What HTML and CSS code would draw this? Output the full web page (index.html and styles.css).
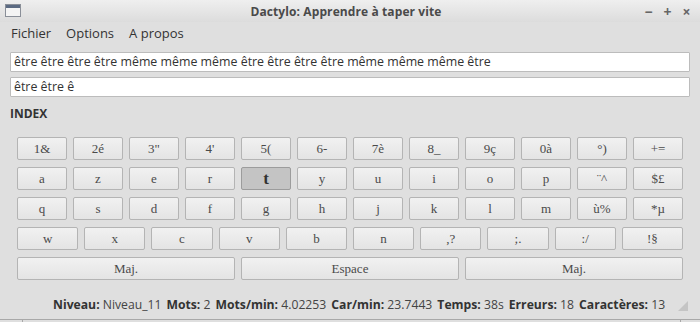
FILE: index.html
```html
<!DOCTYPE html>
<html lang="fr">
<head>
<meta charset="utf-8">
<title>Dactylo</title>
<link rel="stylesheet" href="styles.css">
</head>
<body>
<div class="window">
  <div class="titlebar">
    <svg class="appicon" width="16" height="13" viewBox="0 0 16 13">
      <rect x="0.5" y="0.5" width="15" height="12" fill="#f4f4f4" stroke="#8a8f98"/>
      <rect x="1" y="1" width="14" height="3" fill="#5b6a82"/>
    </svg>
    <div class="title">Dactylo: Apprendre à taper vite</div>
    <div class="wbtns">
      <span class="wbtn">−</span>
      <span class="wbtn">+</span>
      <span class="wbtn">×</span>
    </div>
  </div>
  <div class="menubar">
    <span class="menu">Fichier</span>
    <span class="menu">Options</span>
    <span class="menu">A propos</span>
  </div>
  <div class="content">
    <div class="field">être être être être même même même être être être être même même même être</div>
    <div class="field">être être ê</div>
    <div class="label">INDEX</div>
    <div class="keyboard">
      <div class="row">
        <div class="key">1&amp;</div><div class="key">2é</div><div class="key">3"</div><div class="key">4'</div><div class="key">5(</div><div class="key">6-</div><div class="key">7è</div><div class="key">8_</div><div class="key">9ç</div><div class="key">0à</div><div class="key">°)</div><div class="key">+=</div>
      </div>
      <div class="row">
        <div class="key">a</div><div class="key">z</div><div class="key">e</div><div class="key">r</div><div class="key active">t</div><div class="key">y</div><div class="key">u</div><div class="key">i</div><div class="key">o</div><div class="key">p</div><div class="key">¨^</div><div class="key">$£</div>
      </div>
      <div class="row">
        <div class="key">q</div><div class="key">s</div><div class="key">d</div><div class="key">f</div><div class="key">g</div><div class="key">h</div><div class="key">j</div><div class="key">k</div><div class="key">l</div><div class="key">m</div><div class="key">ù%</div><div class="key">*µ</div>
      </div>
      <div class="row">
        <div class="key">w</div><div class="key">x</div><div class="key">c</div><div class="key">v</div><div class="key">b</div><div class="key">n</div><div class="key">,?</div><div class="key">;.</div><div class="key">:/</div><div class="key">!§</div>
      </div>
      <div class="row">
        <div class="key">Maj.</div><div class="key">Espace</div><div class="key">Maj.</div>
      </div>
    </div>
    <div class="status">
      <span class="stat"><b>Niveau:</b> Niveau_11</span>
      <span class="stat"><b>Mots:</b> 2</span>
      <span class="stat"><b>Mots/min:</b> 4.02253</span>
      <span class="stat"><b>Car/min:</b> 23.7443</span>
      <span class="stat"><b>Temps:</b> 38s</span>
      <span class="stat"><b>Erreurs:</b> 18</span>
      <span class="stat"><b>Caractères:</b> 13</span>
      <svg class="grip" width="10" height="10" viewBox="0 0 10 10"><path d="M10 0 L10 10 L0 10 Z" fill="#c4c4c4"/></svg>
    </div>
  </div>
  <div class="bottom"><span class="tick1"></span><span class="tick2"></span></div>
</div>
</body>
</html>
```
FILE: styles.css
```css
* { box-sizing: border-box; }
html, body { margin: 0; padding: 0; }
body {
  width: 700px;
  height: 322px;
  overflow: hidden;
  background: #dfdfdf;
  font-family: "Open Sans", "Noto Sans", "DejaVu Sans", sans-serif;
  color: #3c3c3c;
}
.window { display: flex; flex-direction: column; height: 322px; }
.titlebar {
  height: 22px;
  display: flex;
  align-items: center;
  background: linear-gradient(#efefef, #dcdcdc);
  padding: 0 8px 0 5px;
}
.appicon { flex: none; margin-top: -1px; }
.title {
  flex: 1;
  text-align: center;
  font-weight: bold;
  font-size: 12px;
  color: #4a4a4a;
  padding-left: 28px;
  letter-spacing: 0.1px;
}
.wbtns { display: flex; gap: 8px; color: #666; font-size: 14px; font-weight: bold; }
.wbtn { width: 11px; text-align: center; }
.menubar {
  height: 22px;
  display: flex;
  align-items: center;
  gap: 15px;
  padding: 0 0 0 11px;
  font-size: 13px;
  color: #333;
}
.content { flex: 1; display: flex; flex-direction: column; padding: 8px 10px 0 10px; }
.field {
  height: 20px;
  background: #fff;
  border: 1px solid #bcbcbc;
  border-radius: 1px;
  font-size: 12.4px;
  line-height: 18px;
  padding: 0 3px;
  color: #333;
  margin-bottom: 5px;
  white-space: nowrap;
  overflow: hidden;
}
.label {
  font-weight: bold;
  font-size: 12px;
  color: #333;
  margin-top: 2px;
  height: 20px;
  line-height: 20px;
}
.keyboard {
  display: flex;
  flex-direction: column;
  gap: 7px;
  margin: 13px 7px 0 7px;
}
.row { display: flex; gap: 6px; }
.key {
  flex: 1;
  height: 23px;
  border: 1px solid #b4b4b4;
  border-radius: 2px;
  background: linear-gradient(#f1f1f1, #e4e4e4);
  font-family: "Liberation Serif", "DejaVu Serif", serif;
  font-size: 13px;
  color: #4a4a4a;
  display: flex;
  align-items: center;
  justify-content: center;
}
.key.active {
  background: #c4c4c4;
  border-color: #9c9c9c;
  font-weight: bold;
  font-size: 17px;
  color: #333;
}
.status {
  display: flex;
  align-items: center;
  gap: 5px;
  margin-top: 15px;
  padding-left: 43px;
  font-size: 12.2px;
  color: #444;
  height: 18px;
  white-space: nowrap;
}
.stat { flex: none; }
.status b { color: #333; }
.grip { flex: none; margin-left: 8px; margin-top: 4px; }
.bottom {
  height: 3px;
  border-top: 1px solid #a8a8a8;
  position: relative;
}
.tick1, .tick2 { position: absolute; top: 0; width: 1px; height: 3px; background: #a8a8a8; }
.tick1 { left: 22px; }
.tick2 { left: 680px; }
```
